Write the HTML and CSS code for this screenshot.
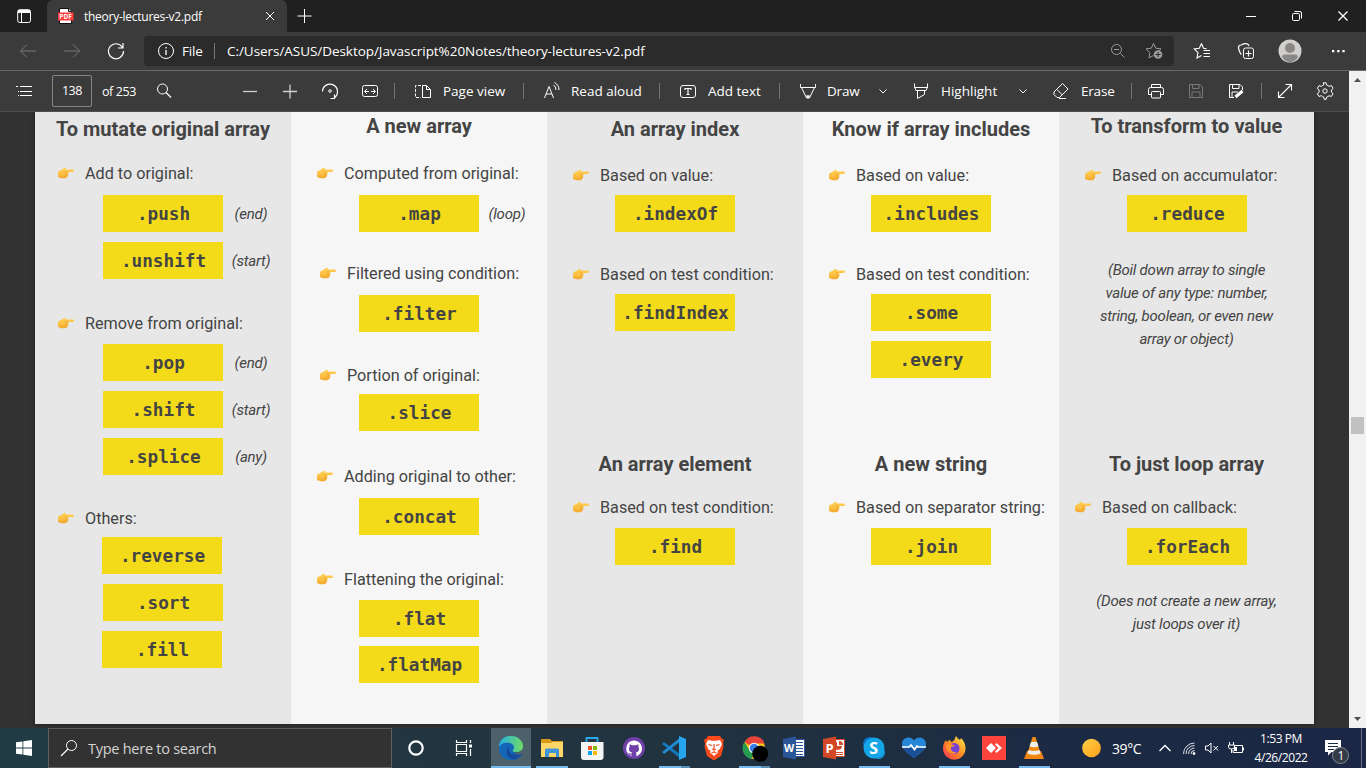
FILE: index.html
```html
<!DOCTYPE html>
<html lang="en">
<head>
<meta charset="utf-8">
<title>theory-lectures-v2.pdf</title>
<link rel="stylesheet" href="styles.css">
</head>
<body>
<svg class="defs" width="0" height="0">
  <defs>
    <linearGradient id="skin" x1="0" y1="0" x2="0" y2="1"><stop offset="0" stop-color="#ffd052"/><stop offset=".6" stop-color="#fcc044"/><stop offset="1" stop-color="#f3a62b"/></linearGradient>
    <linearGradient id="edgeBlue" x1="0" y1="0" x2="1" y2="1"><stop offset="0" stop-color="#168bd0"/><stop offset="1" stop-color="#0c4f9f"/></linearGradient>
    <linearGradient id="edgeGreen" x1="0" y1="0" x2="1" y2="0"><stop offset="0" stop-color="#26aee2"/><stop offset="1" stop-color="#70dc65"/></linearGradient>
    <linearGradient id="sun" x1="0" y1="0" x2="1" y2="1"><stop offset="0" stop-color="#ffd04a"/><stop offset="1" stop-color="#ff9f16"/></linearGradient>
    <linearGradient id="fire" x1="1" y1="0" x2="0" y2="1"><stop offset="0" stop-color="#fff04a"/><stop offset=".5" stop-color="#ff8a22"/><stop offset="1" stop-color="#f52a5c"/></linearGradient>
    <symbol id="hand" viewBox="0 0 16 12">
      <path fill="url(#skin)" d="M0 5C1 3.500 3 3.200 4.300 2.200 5.300 1.300 6 .8 7 .7c1.200 0 1.200 1.200.4 1.800h7.400c1.500 0 1.500 2.300 0 2.400H10c.7.5.7 1.300.2 1.800.4.6.3 1.400-.3 1.800.2.8-.3 1.500-1 1.600-.1.9-.8 1.100-1.700 1.100H3.800C2.500 11 1.500 10.300 0 10.300z"/>
      <path fill="none" stroke="#e39a2c" stroke-width=".5" d="M6.500 4.900H10M7 6.900h3M7 8.700h2.600"/>
    </symbol>
    <symbol id="chev" viewBox="0 0 10 10"><path d="M1.500 3.500 5 7l3.500-3.500"/></symbol>
  </defs>
</svg>

<header class="tabs">
  <svg class="line pane" width="16" height="16" viewBox="0 0 16 16"><rect x="1.700" y="1.700" width="12.800" height="12.800" rx="2"/><path d="M2 3.500h12" stroke-width="3"/><path d="M5.500 4v10"/></svg>
  <div class="tab">
    <svg width="16" height="16" viewBox="0 0 16 16"><path fill="#fff" stroke="#111" d="M1.500.5h9l3 3v12h-12z"/><path fill="#ddd" stroke="#111" d="M10.500.5v3h3"/><path fill="#ff3b3b" d="M0 4.500h15.500v8H0z"/><text class="pdf" x="1.300" y="11">PDF</text></svg>
    <span class="tab-title">theory-lectures-v2.pdf</span>
    <svg class="line" width="10" height="10" viewBox="0 0 10 10"><path d="m1 1 8 8M9 1 1 9"/></svg>
  </div>
  <svg class="line plus" width="16" height="16" viewBox="0 0 16 16"><path d="M7.500 1v14M.5 8h14"/></svg>
  <svg class="line win" width="10" height="10" viewBox="0 0 10 10"><path d="M0 5.500h10"/></svg>
  <svg class="line win" width="12" height="12" viewBox="0 0 12 12"><rect x="1.500" y="3.500" width="7" height="7" rx="1.200"/><path d="M3.500 1.500H9q1.500 0 1.500 1.500v5.500"/></svg>
  <svg class="line win" width="12" height="12" viewBox="0 0 12 12"><path d="m1.500 1.500 9 9M10.500 1.500l-9 9" stroke-width="1.300"/></svg>
</header>

<nav class="address">
  <svg class="line dim" width="18" height="16" viewBox="0 0 18 16"><path d="M17 8H1.500M8 1.500 1.500 8 8 14.500"/></svg>
  <svg class="line dim" width="18" height="16" viewBox="0 0 18 16"><path d="M1 8h15.500M10 1.500 16.500 8 10 14.500"/></svg>
  <svg class="line" width="18" height="18" viewBox="0 0 18 18"><path d="M15.500 5.500A7.500 7.500 0 1 0 16.500 9M16 1v5h-5" stroke-width="1.200"/></svg>
  <div class="url">
    <svg class="line" width="18" height="18" viewBox="0 0 18 18"><circle cx="9" cy="9" r="7.500"/><path d="M9 8v5M9 5v1.500" stroke-width="1.300"/></svg>
    <span class="file">File</span><i></i>
    <span class="path">C:/Users/ASUS/Desktop/Javascript%20Notes/theory-lectures-v2.pdf</span>
    <svg class="line grey" width="16" height="16" viewBox="0 0 16 16"><circle cx="6.500" cy="6.500" r="5"/><path d="m10.500 10.500 4 4M4 6.500h5"/></svg>
    <svg class="line grey" width="20" height="18" viewBox="0 0 20 18"><path d="m8.500 1.500 2.200 4.700 5.300.7-3 3M8.500 1.500 6.300 6.200l-5.300.7 3.900 3.700-.9 5.300 4.500-2.400"/><circle cx="13" cy="12.500" r="4.300" fill="#9b9b9b" stroke="none"/><path stroke="#2b2b2b" d="M13 10v5M10.500 12.500h5"/></svg>
  </div>
  <svg class="line" width="18" height="18" viewBox="0 0 18 18"><path d="m8.500 1.500 2 4.700 3 .4M8.500 1.500 6.300 6.200l-5.100.7L5 10.600l-1 5.300 4.500-2.500M10.500 8.500h6.500M10.500 11.500h6.500M10.500 14.500h6.500" stroke-width="1.100"/></svg>
  <svg class="line" width="18" height="18" viewBox="0 0 18 18"><rect x="6.500" y="6" width="10" height="10.500" rx="2"/><path d="M11.500 8.500v6M8.500 11.500h6M4.500 12.500C3 11.500 1.500 7 1.500 5.500S2.500 3 4 3c4-2 7-2 8 1" stroke-width="1.200"/></svg>
  <svg width="24" height="24" viewBox="0 0 24 24"><circle cx="12" cy="12" r="11.500" fill="#d2d0ce"/><circle cx="12" cy="9" r="5" fill="#8a8886"/><path fill="#8a8886" d="M4 18q0-2.500 3-2.500h10q3 0 3 2.500-3 5-8 5t-8-5"/></svg>
  <svg width="16" height="6" viewBox="0 0 16 6"><path fill="#fff" d="M2 2h2.300v2.300H2zM7.200 2h2.300v2.300H7.200zM12.400 2h2.300v2.300h-2.300z"/></svg>
</nav>

<div class="viewer">
  <div class="main">
    <div class="tools">
      <svg class="line" width="20" height="20" viewBox="0 0 20 20"><path d="M6 5.500h12M6 10.500h12M6 14.500h12M2 5.500h2M4 10.500h1M4 14.500h1"/></svg>
      <span class="pagebox">138</span>
      <span class="t-of">of 253</span>
      <svg class="line" width="20" height="20" viewBox="0 0 20 20"><circle cx="8.500" cy="8" r="5"/><path d="m12 11.500 5 5" stroke-width="1.200"/></svg>
      <svg class="line soft" width="20" height="20" viewBox="0 0 20 20"><path d="M3 10.500h14" stroke-width="1.300"/></svg>
      <svg class="line soft" width="20" height="20" viewBox="0 0 20 20"><path d="M3 10.500h14M10 3.500v14" stroke-width="1.300"/></svg>
      <svg class="line" width="20" height="20" viewBox="0 0 20 20"><path d="M2.500 10.500a7.500 7.500 0 1 1 11.500 6.500M10.500 17.500h4v-4" stroke-width="1.200"/><circle cx="10" cy="10" r="1.300"/></svg>
      <svg class="line" width="20" height="20" viewBox="0 0 20 20"><rect x="2.500" y="4.500" width="15" height="11" rx="2"/><path d="M5 10.500h4M11 10.500h4M7 8l-2.500 2.500L7 13M13 8l2.500 2.500L13 13"/></svg>
      <i></i>
      <svg class="line" width="20" height="20" viewBox="0 0 20 20"><path stroke-dasharray="3 1.500" d="M8 4.500H2.500v12H8"/><path d="M9.500 4.500h4l4 4v8h-8zM13.500 4.500v4h4"/></svg>
      <span>Page view</span><i></i>
      <svg class="line" width="20" height="20" viewBox="0 0 20 20"><path d="M2.500 17 7 5.500 11.500 17M4 13h6M11.500 4q2.500 1.500 2.500 5M12.500 1.500Q17 4 17 9"/></svg>
      <span>Read aloud</span><i></i>
      <svg class="line" width="20" height="20" viewBox="0 0 20 20"><rect x="2.500" y="4.500" width="15" height="12" rx="2.500"/><path d="M7 9V7.500h6V9M10 7.500v6M8.500 13.500h3" stroke-width="1.200"/></svg>
      <span>Add text</span><i></i>
      <svg class="line" width="20" height="20" viewBox="0 0 20 20"><path d="M2.500 3v3.500h15V3M3.500 6.500 8.500 17h3l5-10.500"/><path d="M8.500 15.500h3" stroke-width="2.500"/></svg>
      <span class="t-draw">Draw</span>
      <svg class="line" width="10" height="10"><use href="#chev"/></svg>
      <svg class="line" width="20" height="20" viewBox="0 0 20 20"><path d="M3.500 2.500V6L5 9.500h10L16.500 6V2.500M4 6.500h12.500M6.500 9.500v8l7-4v-4"/></svg>
      <span>Highlight</span>
      <svg class="line" width="10" height="10"><use href="#chev"/></svg>
      <svg class="line" width="20" height="20" viewBox="0 0 20 20"><path d="m3 11 8.500-8.500 5.500 5.500-8.500 8.500H6L3 13.500zM6 8.500l5.500 5.500M8 17.500h7"/></svg>
      <span class="t-erase">Erase</span><i></i>
      <svg class="line" width="20" height="20" viewBox="0 0 20 20"><path d="M5.500 13.500h-3v-5q0-2 2-2h11q2 0 2 2v5h-3M5.500 6.500v-3h9v3"/><rect x="5.500" y="10.500" width="9" height="6.500" rx="1"/></svg>
      <svg class="line dim" width="20" height="20" viewBox="0 0 20 20"><path d="M3.500 3.500H14l2.500 2.500v10.500h-13zM6.500 3.500v4h6.500v-4M6 16.500V11h8v5.500"/></svg>
      <svg class="line" width="20" height="20" viewBox="0 0 20 20"><path d="M8 16.500H3.500v-13H14L16.500 6v3M6.500 3.500v4h6.500v-4M6 16.500V11h6"/><path stroke-width="3" d="m9.500 16 7-6"/></svg>
      <i></i>
      <svg class="line" width="20" height="20" viewBox="0 0 20 20"><path d="m3.500 16.500 13-13M10.500 3.500h6v6M3.500 10.500v6h6" stroke-width="1.100"/></svg>
      <svg class="line" width="20" height="20" viewBox="0 0 20 20"><path d="m8.300 1.800.5 2.200q-1.500.5-2.500 1.400l-2.200-.9-1.800 2.900 1.800 1.500v2.300l-1.800 1.500L4 15.500l2.300-.8q1 1 2.500 1.400l.4 2.200h2l.4-2.200q1.500-.4 2.500-1.400l2.200.8 1.800-2.800-1.700-1.500V8.900l1.700-1.500-1.800-2.900-2.200.9Q13 4.500 11.600 4l-.5-2.200z"/><circle cx="10" cy="10" r="2.200"/></svg>
    </div>

    <div class="canvas">
      <main class="sheet">
        <section class="col first">
          <h2 class="mt5">To mutate original array</h2>
          <p class="label mt22"><svg><use href="#hand"/></svg>Add to original:</p>
          <div class="row mt12"><b>.push</b><em>(end)</em></div>
          <div class="row mt10"><b>.unshift</b><em>(start)</em></div>
          <p class="label mt34"><svg><use href="#hand"/></svg>Remove from original:</p>
          <div class="row mt11"><b>.pop</b><em>(end)</em></div>
          <div class="row mt10"><b>.shift</b><em>(start)</em></div>
          <div class="row mt10"><b>.splice</b><em>(any)</em></div>
          <p class="label mt33"><svg><use href="#hand"/></svg>Others:</p>
          <div class="row shy mt9"><b>.reverse</b></div>
          <div class="row mt10"><b>.sort</b></div>
          <div class="row shy mt10"><b>.fill</b></div>
        </section>
        <section class="col light">
          <h2 class="mt2">A new array</h2>
          <p class="label mt25"><svg><use href="#hand"/></svg>Computed from original:</p>
          <div class="row mt12"><b>.map</b><em>(loop)</em></div>
          <p class="label in mt31"><svg><use href="#hand"/></svg>Filtered using condition:</p>
          <div class="row mt12"><b>.filter</b></div>
          <p class="label in mt33"><svg><use href="#hand"/></svg>Portion of original:</p>
          <div class="row mt9"><b>.slice</b></div>
          <p class="label mt35"><svg><use href="#hand"/></svg>Adding original to other:</p>
          <div class="row mt12"><b>.concat</b></div>
          <p class="label mt34"><svg><use href="#hand"/></svg>Flattening the original:</p>
          <div class="row mt11"><b>.flat</b></div>
          <div class="row mt9"><b>.flatMap</b></div>
        </section>
        <section class="col">
          <h2 class="mt5">An array index</h2>
          <p class="label mt24"><svg><use href="#hand"/></svg>Based on value:</p>
          <div class="row mt10"><b>.indexOf</b></div>
          <p class="label mt32"><svg><use href="#hand"/></svg>Based on test condition:</p>
          <div class="row mt10"><b>.findIndex</b></div>
          <h2 class="mt121">An array element</h2>
          <p class="label mt21"><svg><use href="#hand"/></svg>Based on test condition:</p>
          <div class="row mt11"><b>.find</b></div>
        </section>
        <section class="col light">
          <h2 class="mt5">Know if array includes</h2>
          <p class="label mt24"><svg><use href="#hand"/></svg>Based on value:</p>
          <div class="row mt10"><b>.includes</b></div>
          <p class="label mt32"><svg><use href="#hand"/></svg>Based on test condition:</p>
          <div class="row mt10"><b>.some</b></div>
          <div class="row mt10"><b>.every</b></div>
          <h2 class="mt74">A new string</h2>
          <p class="label mt21"><svg><use href="#hand"/></svg>Based on separator string:</p>
          <div class="row mt11"><b>.join</b></div>
        </section>
        <section class="col">
          <h2 class="mt2">To transform to value</h2>
          <p class="label mt27"><svg><use href="#hand"/></svg>Based on accumulator:</p>
          <div class="row mt10"><b>.reduce</b></div>
          <p class="note mt27">(Boil down array to single<br>value of any type: number,<br>string, boolean, or even new<br>array or object)</p>
          <h2 class="mt101">To just loop array</h2>
          <p class="label out mt21"><svg><use href="#hand"/></svg>Based on callback:</p>
          <div class="row mt11"><b>.forEach</b></div>
          <p class="note mt25">(Does not create a new array,<br>just loops over it)</p>
        </section>
      </main>
    </div>
  </div>
  <div class="scroll">
    <svg width="17" height="17" viewBox="0 0 17 17"><path fill="#505050" d="M5 11h7L8.500 7z"/></svg>
    <div class="thumb"></div>
    <svg width="17" height="17" viewBox="0 0 17 17"><path fill="#505050" d="M5 6h7l-3.500 4z"/></svg>
  </div>
</div>

<footer class="taskbar">
  <svg class="start" width="16" height="16" viewBox="0 0 16 16"><path fill="#fff" d="m0 2.300 6.500-.9v6.200H0zM7.300 1.300 16 0v7.600H7.300zM0 8.400h6.500v6.200L0 13.700zM7.300 8.400H16V16l-8.700-1.300z"/></svg>
  <div class="search">
    <svg class="line" width="18" height="18" viewBox="0 0 18 18"><circle cx="11.500" cy="6.500" r="5"/><path d="m8 10-7 7" stroke-width="1.200"/></svg>
    <span>Type here to search</span>
  </div>
  <svg width="40" height="40" viewBox="0 0 40 40"><circle cx="20" cy="20" r="6.700" fill="none" stroke="#fff" stroke-width="2.200"/></svg>
  <svg class="line" width="40" height="40" viewBox="0 0 40 40"><path d="M12.500 12v2.500h10V12M12.500 28v-2.500h10V28M12.500 16.500h10v7h-10zM26.500 12v3M26.500 21v7" stroke-width="1.200"/><path fill="#fff" stroke="none" d="M25 16.500h3v3h-3z"/></svg>
  <div class="apps">
    <svg class="active" viewBox="0 0 40 40"><path fill="url(#edgeBlue)" d="M8 20C8 12 13 8 20 8s12 5 12 10l-6 5q-5 2 1 4c2 .6 3 0 4-.7C29 30 25 32 20 32 13 32 8 27 8 20"/><path fill="url(#edgeGreen)" d="M8 19C9 11 14 8 20 8c7 0 12 5 12 10 0 4-3 6-7 6-3 0-4-1-3-2 2-2 1-6-3-7-4-1-9 1-11 4"/><path fill="#1466b8" d="M8 20c1-4 6-6 9-5 3 0 5 2 5 5-2-1-5 1-4 4 1 4 6 5 9 4 2 0 3-1 4-2-2 4-6 6-11 6C13 32 8 27 8 20"/><path fill="#17499a" d="M18 19c-4 3-3 9 2 12 4 1 8-1 11-5-8 3-14 0-13-7"/><path fill="#76b9ed" d="M0 38h40v2H0z"/></svg>
    <svg class="folder" viewBox="0 0 40 40"><path fill="#d99a17" d="M9 11h9l2 2h11v6H9z"/><path fill="#ffd768" d="M9 15h10l2-1h10v15H9z"/><path fill="#3a96d8" d="M13 29v-7q0-1.500 1.500-1.500h11q1.500 0 1.500 1.500v7h-3v-4h-7v4z"/><path fill="#76b9ed" d="M4 38h32v2H4z"/></svg>
    <svg viewBox="0 0 40 40"><path fill="none" stroke="#2aa9e8" stroke-width="1.800" d="M14.500 14v-4h11v4"/><path fill="#f5f5f5" d="M9 14h22.500v15q0 3-3 3H12q-3 0-3-3z"/><path fill="#f35325" d="M16 18h4v4h-4z"/><path fill="#81bc06" d="M21 18h4v4h-4z"/><path fill="#05a6f0" d="M16 23h4v4h-4z"/><path fill="#ffba08" d="M21 23h4v4h-4z"/></svg>
    <svg class="hub" viewBox="0 0 40 40"><circle cx="20" cy="20" r="11" fill="#6e40a8"/><path fill="#fff" d="M20 12.500a8 8 0 0 0-3 15.300c.7.100.8-.4.8-1-2.500.5-3-1.300-3.500-2 1.500-.3 1.500 1.200 3.500.8l.4-1.200c-3-.5-4-3-2.700-5.500l.2-2.700 2.300 1h4l2.300-1 .2 2.700c1.300 2.500.3 5-2.700 5.500.7.6.6 2.200.6 3.100 0 .5.300.6.7.4A8 8 0 0 0 20 12.500"/></svg>
    <svg viewBox="0 0 40 40"><path fill="#1478bd" d="m8 16 2-2 17 13v4z"/><path fill="#1f8ad2" d="m8 24 2 2 17-13V9z"/><path fill="#27a6f0" d="m25 8 7 3v18l-7 3z"/><path fill="#76b9ed" d="M5 38h22v2H5z"/><path fill="#5a8db4" d="M27 38h9v2h-9z"/></svg>
    <svg viewBox="0 0 40 40"><path fill="#fb4b1d" d="M14 8h12l2 3 2 .5-1 4 .5 3-2.500 9.500-7 4.500-7-4.500L10.500 18.500l.5-3-1-4 2-.5z"/><path fill="#fff" d="m14 12 4 .8h4l4-.8 2 4-2.500 5.500-2 1 .5 2-4 3.500-4-3.500.5-2-2-1L12 16z"/><path fill="none" stroke="#fb4b1d" stroke-width="1.200" d="m14.500 16.500 3.500 1M25.500 16.500l-3.500 1M18 21l2 1 2-1M20 16v5M17.500 25l2.500-1 2.500 1"/></svg>
    <svg viewBox="0 0 40 40"><circle cx="20" cy="20" r="11" fill="#fbc116"/><path fill="#e8453c" d="M20 20 10.500 14a11 11 0 0 1 20 1.500H20"/><path fill="#279b4f" d="M10.500 14 16 23l4 3-3 5A11 11 0 0 1 10.500 14"/><circle cx="20" cy="20" r="5.300" fill="#fff"/><circle cx="20" cy="20" r="4.300" fill="#3b7ded"/><circle cx="26.200" cy="25.800" r="8" fill="#000"/><path fill="#76b9ed" d="M5 38h22v2H5z"/><path fill="#5a8db4" d="M27 38h9v2h-9z"/></svg>
    <svg viewBox="0 0 40 40"><path fill="#fff" stroke="#2b579a" d="M20 11.500h10.500v17H20z"/><path stroke="#2b579a" d="M22 14.500h7M22 17.500h7M22 20.500h7M22 23.500h7M22 26.500h7"/><path fill="#2b579a" d="m9 11 13-2.500v23L9 29z"/><text class="office" x="10" y="24">W</text></svg>
    <svg viewBox="0 0 40 40"><path fill="#fff" stroke="#d24726" d="M20 11.500h10.500v17H20z"/><path fill="#d24726" d="M23 14a4 4 0 1 0 5 4h-5zM25 13v4h4q0-4-4-4M22 24h7v1h-7zM22 26h7v1h-7z"/><path fill="#d24726" d="m9 11 13-2.500v23L9 29z"/><text class="office ppt" x="11.500" y="24.500">P</text></svg>
    <svg viewBox="0 0 40 40"><circle cx="15.500" cy="15.500" r="6.500" fill="#0b6fc4"/><circle cx="24.500" cy="24.500" r="6.500" fill="#1792dc"/><circle cx="20" cy="20" r="10.500" fill="#14a5e6"/><text class="skype" x="15.200" y="25.700">S</text><path fill="#76b9ed" d="M5 38h31v2H5z"/></svg>
    <svg viewBox="0 0 40 40"><path fill="#2687d9" d="M20 12.500c3-5 12-3.500 12 3.500 0 6-7 10-12 14-5-4-12-8-12-14 0-7 9-8.500 12-3.500"/><path fill="#1a4f98" d="M9.500 20h21c-2 4-7 7-10.500 10-3.500-3-8.500-6-10.500-10"/><path fill="none" stroke="#fff" stroke-width="1.700" d="M8 19h7l2-2 3.500 4.500L23 18l1 1h8"/></svg>
    <svg viewBox="0 0 40 40"><path fill="url(#fire)" d="M22 8q1 2 4 4l1-2c3 3 4.500 6.500 4.500 10A11 11 0 0 1 9 21c0-4 1-7 3-9l1 2 3-2.500q0 2 2 2.500 3-2 4-6"/><circle cx="20" cy="20.500" r="5.500" fill="#7542d8"/><path fill="#ff932a" d="m12 17 4-2q1 2 5 2-1 2-4 2-1 6 6 5-3 3-7 1-4-2-4-8"/><path fill="#76b9ed" d="M5 38h31v2H5z"/></svg>
    <svg viewBox="0 0 40 40"><path fill="#ff443d" d="M8 8h24v24H8z"/><path fill="#fff" d="m17 15 5 5-5 5-5-5zM21 16.500l1.500-1.500 5.500 5-5.500 5-1.500-1.500 3.500-3.500z"/></svg>
    <svg viewBox="0 0 40 40"><path fill="#f28414" d="M13 23h14l3 8H10z"/><path fill="#f48b13" d="M18.500 9h3l5.500 18q-7 3-14 0z"/><path fill="#eee" d="m17 14 6 0 1.500 4.500q-4.500 1.500-9 0zM14.500 22q5.500 2 11 0l1 3.500q-6.500 2.500-13 0z"/><path fill="#76b9ed" d="M5 38h31v2H5z"/></svg>
  </div>
  <svg class="sun" width="20" height="20" viewBox="0 0 20 20"><circle cx="10.500" cy="10" r="9.300" fill="url(#sun)"/></svg>
  <span class="temp">39°C</span>
  <svg class="line" width="14" height="10" viewBox="0 0 14 10"><path d="m1.500 8 5.500-5.500L12.500 8" stroke-width="1.300"/></svg>
  <svg class="line" width="14" height="14" viewBox="0 0 14 14"><path opacity=".85" d="M1.500 13A11 11 0 0 1 12.500 2M4 13a8.500 8.500 0 0 1 8.500-8.500M6.500 13a6 6 0 0 1 6-6M9 13a3.500 3.500 0 0 1 3.500-3.500"/><circle cx="12" cy="12.500" r="1" fill="#fff"/></svg>
  <svg class="line" width="16" height="14" viewBox="0 0 16 14"><path d="M1.500 5v4H4l3 3V2L4 5zM9.500 5l4.500 4.500M14 5 9.500 9.500"/></svg>
  <svg class="line" width="18" height="14" viewBox="0 0 18 14"><path d="M8 4.500h7.500v7H6V9M16.500 6.500v3M2.500 1v3M6.500 1v3M1.500 4h6v2q0 2-3 2t-3-2zM4.500 8v4"/><path fill="#fff" stroke="none" d="M7 6h3v4H7z"/></svg>
  <div class="clock"><span>1:53 PM</span><span class="date">4/26/2022</span></div>
  <svg class="bell" width="26" height="28" viewBox="0 0 26 28"><path fill="#fff" d="M1 2h16v12H7.500L4 17.500V14H1z"/><path stroke="#1d2945" d="M4 5.500h10M4 8.500h10M4 11.500h6"/><circle cx="16.500" cy="17.500" r="8" fill="#333b47" stroke="#858c96"/><text class="count" x="13.500" y="22">1</text></svg>
  <i class="peek"></i>
</footer>
</body>
</html>
```

FILE: styles.css
```css
* { box-sizing: border-box; }
body {
  margin: 0;
  width: 1366px;
  height: 768px;
  overflow: hidden;
  background: #323232;
  color: #fff;
  font-family: "Open Sans", "Noto Sans", sans-serif;
  font-size: 13px;
  white-space: nowrap;
}
svg { display: block; flex: none; }
.defs { position: absolute; }
.line { fill: none; stroke: #fff; }
.dim { stroke: #787878; }
.grey { stroke: #9b9b9b; }
.soft { stroke: #cfcfcf; }

/* tab strip */
.tabs {
  display: grid;
  grid-template-columns: 31px 250px 949px 45px 46px 20px;
  align-items: center;
  height: 32px;
  padding-left: 16px;
  background: #202020;
}
.tab {
  display: grid;
  grid-template-columns: 26px 181px 10px;
  align-items: center;
  width: 240px;
  height: 32px;
  padding-left: 11px;
  background: #3b3b3b;
  border-radius: 6px 6px 0 0;
}
.tab-title { font-size: 12px; letter-spacing: -.26px; }
.pdf { font: bold 6.5px "Open Sans", sans-serif; fill: #fff; }

/* address row */
.address {
  display: grid;
  grid-template-columns: 44px 44px 37px 1049px 44px 41px 52px 16px;
  align-items: center;
  height: 38px;
  padding-left: 19px;
  background: #3b3b3b;
}
.url {
  display: grid;
  grid-template-columns: 25px 32px 13px 883px 35px 20px;
  align-items: center;
  width: 1030px;
  height: 30px;
  padding-left: 13px;
  border-radius: 4px;
  background: #2b2b2b;
}
.url i { width: 1px; height: 16px; background: #777; }
.file { font-size: 13.5px; letter-spacing: -.2px; }
.path { font-size: 13.5px; letter-spacing: -.05px; }

/* viewer */
.viewer { display: flex; height: 658px; border-top: 1px solid #696969; }
.main { width: 1349px; }
.tools {
  display: grid;
  grid-template-columns: 38px 50px 52px 86px 40px 40px 40px 34px 19px 30px 80px 19px 29px 88px 19px 30px 71px 19px 29px 51px 33px 30px 77px 33px 30px 50px 15px 40px 40px 35px 14px 40px 20px;
  align-items: center;
  height: 41px;
  padding-left: 14px;
  background: #3b3b3b;
  border-bottom: 1px solid #4e4e4e;
  font-size: 13.5px;
  letter-spacing: 0;
}
.tools i { width: 1px; height: 16px; background: #747474; }
.tools .t-draw, .tools .t-erase { letter-spacing: -.2px; }
.tools .pagebox {
  width: 40px;
  height: 32px;
  border: 1px solid #858585;
  border-radius: 2px;
  font-size: 12.5px;
  line-height: 30px;
  text-align: center;
  letter-spacing: -.4px;
}
.tools .t-of { font-size: 12.5px; letter-spacing: -.4px; }

.canvas { height: 616px; padding-left: 35px; background: #323232; }
.sheet {
  display: grid;
  grid-template-columns: repeat(4, 256px) 255px;
  width: 1279px;
  height: 612px;
  box-shadow: 0 0 4px #1e1e1e;
  clip-path: inset(0 -6px -6px -6px);
  font-family: Roboto, sans-serif;
  color: #444;
}
.col { display: flex; flex-direction: column; background: #e7e7e7; }
.light { background: #f6f6f6; }
h2 { margin: 0; height: 24px; font-size: 20px; line-height: 24px; font-weight: 700; text-align: center; }
.label {
  display: flex;
  align-items: center;
  height: 20px;
  margin: 0;
  padding: 2px 0 0 26px;
  font-size: 16.2px;
  line-height: 20px;
}
.label svg { width: 16px; height: 12px; margin: -2px 11px 0 0; }
.first .label { padding-left: 23px; }
.label.in { padding-left: 29px; }
.label.out { padding-left: 16px; }
.row { display: flex; align-items: center; height: 37px; padding-left: 68px; }
.shy { padding-left: 67px; }
.row b {
  width: 120px;
  height: 37px;
  padding-left: 1px;
  background: #f4db19;
  font: bold 17.7px/38px "DejaVu Sans Mono", monospace;
  text-align: center;
}
.row em { width: 56px; font-size: 15px; letter-spacing: -.24px; text-align: center; }
.note { margin: 0; font-size: 15px; line-height: 23px; font-style: italic; letter-spacing: -.23px; text-align: center; }

.mt2 { margin-top: 2px; }
.mt5 { margin-top: 5px; }
.mt9 { margin-top: 9px; }
.mt10 { margin-top: 10px; }
.mt11 { margin-top: 11px; }
.mt12 { margin-top: 12px; }
.mt21 { margin-top: 21px; }
.mt22 { margin-top: 22px; }
.mt24 { margin-top: 24px; }
.mt25 { margin-top: 25px; }
.mt27 { margin-top: 27px; }
.mt31 { margin-top: 31px; }
.mt32 { margin-top: 32px; }
.mt33 { margin-top: 33px; }
.mt34 { margin-top: 34px; }
.mt35 { margin-top: 35px; }
.mt74 { margin-top: 74px; }
.mt101 { margin-top: 101px; }
.mt121 { margin-top: 121px; }

.scroll { display: flex; flex-direction: column; width: 17px; background: #f1f1f1; }
.thumb { width: 13px; height: 17px; margin: 329px 2px auto; background: #c1c1c1; }

/* taskbar */
.taskbar {
  display: grid;
  grid-template-columns: 32px 348px 48px 47px 590px 31px 46px 24px 22px 23px 27px 52px 55px 1px;
  align-items: center;
  height: 40px;
  padding-left: 16px;
  background: linear-gradient(90deg, #203b43, #22343f 45%, #1c2b43 75%, #1b2745);
}
.search {
  display: flex;
  align-items: center;
  gap: 10px;
  width: 344px;
  height: 40px;
  padding-left: 11px;
  border: 1px solid #606060;
  background: #323232;
  color: #d4d4d4;
  font-size: 14.5px;
  letter-spacing: -.26px;
}
.apps { display: flex; }
.apps svg { width: 40px; height: 40px; }
.apps .active { background: #4d616a; }
.apps .folder { margin-left: 1px; }
.apps .hub { margin-left: 2px; }
.office { font: bold 10.5px "Open Sans", sans-serif; fill: #fff; }
.ppt { font-size: 13px; }
.skype { font: bold 16px "Open Sans", sans-serif; fill: #fff; }
.temp { font-size: 14px; letter-spacing: -.4px; }
.clock { display: flex; flex-direction: column; align-items: center; padding-left: 2px; font-size: 12px; line-height: 19px; letter-spacing: -.42px; }
.bell { margin: 8px 0 0 18px; }
.count { font: 12px "Open Sans", sans-serif; fill: #fff; }
.peek { width: 1px; height: 40px; background: #656f82; }
```
